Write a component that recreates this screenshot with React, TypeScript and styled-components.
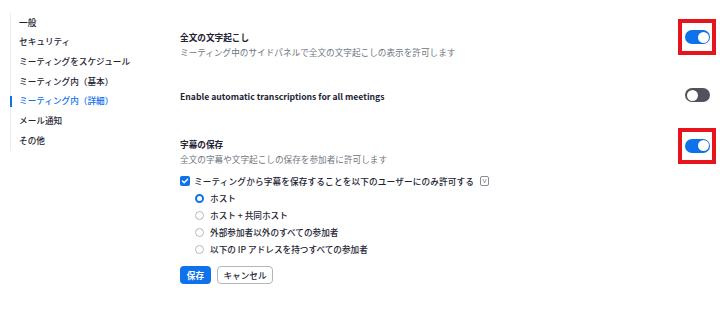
import React, { useState } from 'react';
import styled, { createGlobalStyle } from 'styled-components';

const GlobalStyle = createGlobalStyle`
  html, body {
    margin: 0;
    padding: 0;
    background: #ffffff;
  }
  body {
    font-family: 'Noto Sans CJK JP', 'Noto Sans', sans-serif;
    color: #232333;
  }
`;

const menuItems = [
  '一般',
  'セキュリティ',
  'ミーティングをスケジュール',
  'ミーティング内（基本）',
  'ミーティング内（詳細）',
  'メール通知',
  'その他',
];

const radioOptions = [
  'ホスト',
  'ホスト + 共同ホスト',
  '外部参加者以外のすべての参加者',
  '以下の IP アドレスを持つすべての参加者',
];

const App: React.FC = () => {
  const [selected, setSelected] = useState(0);
  const [transcript, setTranscript] = useState(true);
  const [auto, setAuto] = useState(false);
  const [saveCaptions, setSaveCaptions] = useState(true);

  return (
    <>
      <GlobalStyle />
      <Page>
        <Sidebar>
          {menuItems.map((item, i) => (
            <MenuItem key={item} $active={i === 4}>
              {item}
            </MenuItem>
          ))}
        </Sidebar>

        <Main>
          <SettingRow>
            <SettingText>
              <Heading>全文の文字起こし</Heading>
              <Description>ミーティング中のサイドパネルで全文の文字起こしの表示を許可します</Description>
            </SettingText>
            <Highlight>
              <Toggle $on={transcript} onClick={() => setTranscript(!transcript)} />
            </Highlight>
          </SettingRow>

          <SettingRow $gap={30}>
            <SettingText>
              <Heading>Enable automatic transcriptions for all meetings</Heading>
            </SettingText>
            <Toggle $on={auto} $offsetY={-1} onClick={() => setAuto(!auto)} />
          </SettingRow>

          <SettingRow $gap={33.5}>
            <SettingText>
              <Heading>字幕の保存</Heading>
              <Description>全文の字幕や文字起こしの保存を参加者に許可します</Description>
            </SettingText>
            <Highlight $offsetY={2}>
              <Toggle $on={saveCaptions} onClick={() => setSaveCaptions(!saveCaptions)} />
            </Highlight>
          </SettingRow>

          <CheckRow>
            <CheckBox>
              <svg width="8" height="8" viewBox="0 0 8 8">
                <path d="M1.4 4.1 L3.2 5.8 L6.6 2.2" fill="none" stroke="#fff" strokeWidth="1.4" strokeLinecap="round" strokeLinejoin="round" />
              </svg>
            </CheckBox>
            <CheckLabel>ミーティングから字幕を保存することを以下のユーザーにのみ許可する</CheckLabel>
            <KeyBadge>V</KeyBadge>
          </CheckRow>

          <RadioList>
            {radioOptions.map((opt, i) => (
              <RadioRow key={opt} onClick={() => setSelected(i)}>
                <Radio $checked={selected === i} />
                <RadioLabel>{opt}</RadioLabel>
              </RadioRow>
            ))}
          </RadioList>

          <ButtonRow>
            <PrimaryButton>保存</PrimaryButton>
            <SecondaryButton>キャンセル</SecondaryButton>
          </ButtonRow>
        </Main>
      </Page>
    </>
  );
};

export default App;

const Page = styled.div`
  display: flex;
  width: 720px;
  height: 310px;
  box-sizing: border-box;
  font-size: 8.64px;
`;

const Sidebar = styled.ul`
  list-style: none;
  margin: 12.5px 0 0 10px;
  padding: 0;
  width: 170px;
  height: 138px;
  border-left: 1px solid #ebebeb;
  box-sizing: border-box;
`;

const MenuItem = styled.li<{ $active?: boolean }>`
  position: relative;
  padding-left: 8px;
  height: 19.7px;
  line-height: 19.7px;
  font-weight: 500;
  white-space: nowrap;
  color: ${(p) => (p.$active ? '#0e72ed' : '#232333')};

  &::before {
    content: '';
    display: ${(p) => (p.$active ? 'block' : 'none')};
    position: absolute;
    left: -1px;
    top: 4.5px;
    width: 2px;
    height: 11px;
    background: #0e72ed;
  }
`;

const Main = styled.div`
  flex: 1;
  padding: 30px 10px 0 0;
  box-sizing: border-box;
`;

const SettingRow = styled.div<{ $gap?: number }>`
  display: flex;
  justify-content: space-between;
  align-items: flex-start;
  margin-top: ${(p) => p.$gap ?? 0}px;
`;

const SettingText = styled.div`
  display: flex;
  flex-direction: column;
  gap: 1px;
`;

const Heading = styled.div`
  font-weight: 700;
  line-height: 14px;
  color: #232333;
`;

const Description = styled.div`
  line-height: 14px;
  color: #6e7680;
`;

const Highlight = styled.div<{ $offsetY?: number }>`
  display: flex;
  border: 4px solid #e8141d;
  padding: 7px 2px 7px 3px;
  margin: ${(p) => -11 + (p.$offsetY ?? 0)}px -6px ${(p) => -11 - (p.$offsetY ?? 0)}px 0;
`;

const Toggle = styled.button<{ $on: boolean; $offsetY?: number }>`
  position: relative;
  width: 25px;
  height: 14px;
  padding: 0;
  margin-top: ${(p) => p.$offsetY ?? 0}px;
  border: none;
  border-radius: 7px;
  cursor: pointer;
  background: ${(p) => (p.$on ? '#0e72ed' : '#52525c')};

  &::after {
    content: '';
    position: absolute;
    top: 1.5px;
    left: ${(p) => (p.$on ? '12.5px' : '1.5px')};
    width: 11px;
    height: 11px;
    border-radius: 50%;
    background: #ffffff;
    box-shadow: 0 0 1px rgba(0, 0, 0, 0.25);
  }
`;

const CheckRow = styled.div`
  display: flex;
  align-items: center;
  height: 14px;
  margin-top: 8.5px;
`;

const CheckBox = styled.span`
  display: flex;
  align-items: center;
  justify-content: center;
  width: 10px;
  height: 10px;
  border-radius: 2px;
  background: #0e72ed;
  margin-right: 4px;
`;

const CheckLabel = styled.span`
  line-height: 14px;
  font-weight: 500;
  letter-spacing: 0.15px;
  color: #232333;
`;

const KeyBadge = styled.span`
  display: inline-flex;
  align-items: center;
  justify-content: center;
  width: 7px;
  height: 8px;
  margin-left: 6px;
  border: 1px solid #8a8a94;
  border-radius: 2px;
  font-family: 'Liberation Sans', sans-serif;
  font-size: 6px;
  line-height: 1;
  color: #6e6e78;
`;

const RadioList = styled.div`
  display: flex;
  flex-direction: column;
  margin-top: 1.5px;
  padding-left: 15px;
`;

const RadioRow = styled.label`
  display: flex;
  align-items: center;
  height: 17px;
  cursor: pointer;
`;

const Radio = styled.span<{ $checked: boolean }>`
  width: 9px;
  height: 9px;
  box-sizing: border-box;
  border-radius: 50%;
  background: #ffffff;
  border: ${(p) => (p.$checked ? '2.6px solid #0e72ed' : '1px solid #b8b8c0')};
  margin-right: 6px;
`;

const RadioLabel = styled.span`
  line-height: 14px;
  font-weight: 500;
  color: #232333;
`;

const ButtonRow = styled.div`
  display: flex;
  gap: 6px;
  margin-top: 8.5px;
`;

const Button = styled.button`
  height: 18px;
  padding: 0;
  border-radius: 4px;
  font-family: 'Noto Sans CJK JP', 'Noto Sans', sans-serif;
  font-size: 8.64px;
  cursor: pointer;
`;

const PrimaryButton = styled(Button)`
  width: 31px;
  border: none;
  font-weight: 700;
  background: #0e72ed;
  color: #ffffff;
`;

const SecondaryButton = styled(Button)`
  width: 56px;
  border: 1px solid #b5b5bd;
  font-weight: 500;
  background: #ffffff;
  color: #232333;
`;
